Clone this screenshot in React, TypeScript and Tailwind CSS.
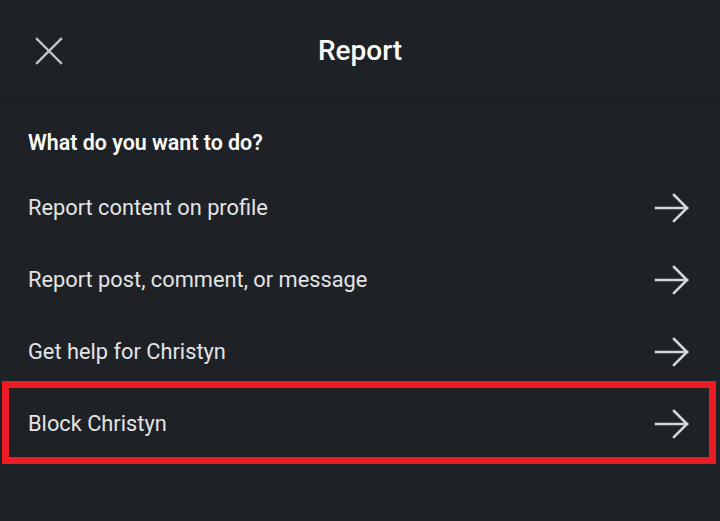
import React from "react";

const Arrow = () => (
  <svg width="36" height="30" viewBox="0 0 36 30" fill="none" stroke="#d4d5d6" strokeWidth="2.6" strokeLinecap="square" strokeLinejoin="miter">
    <path d="M2 15 H33" />
    <path d="M20 2 L33 15 L20 28" />
  </svg>
);

const items = [
  "Report content on profile",
  "Report post, comment, or message",
  "Get help for Christyn",
  "Block Christyn",
];

export default function App() {
  return (
    <div
      className="w-[720px] h-[521px] bg-[#1e2125] text-[#e3e4e5] overflow-hidden"
      style={{ fontFamily: "Roboto, 'Noto Sans', sans-serif" }}
    >
      <div className="relative h-[100px] flex items-center justify-center border-b border-[#1b1e21]">
        <button className="absolute left-[35px] top-[37px] w-[28px] h-[28px]">
          <svg width="28" height="28" viewBox="0 0 28 28" stroke="#c4c5c6" strokeWidth="2.4" strokeLinecap="square">
            <path d="M2 2 L26 26 M26 2 L2 26" />
          </svg>
        </button>
        <div className="text-[28px] font-medium text-white mt-[3px]">Report</div>
      </div>
      <div className="h-[72px] flex items-center px-[28px] pt-[14px] text-[21.4px] font-semibold text-white">
        What do you want to do?
      </div>
      <div className="flex flex-col">
        {items.map((t, i) => (
          <div key={t} className="relative h-[72px] flex items-center justify-between pl-[28px] pr-[30px]">
            <span className="text-[21.8px] mt-[1px]">{t}</span>
            <Arrow />
            {i === 3 && (
              <div className="absolute left-[2px] right-[4px] top-[-7px] bottom-[-4px] border-[7px] border-[#ec1c24] pointer-events-none" />
            )}
          </div>
        ))}
      </div>
    </div>
  );
}
